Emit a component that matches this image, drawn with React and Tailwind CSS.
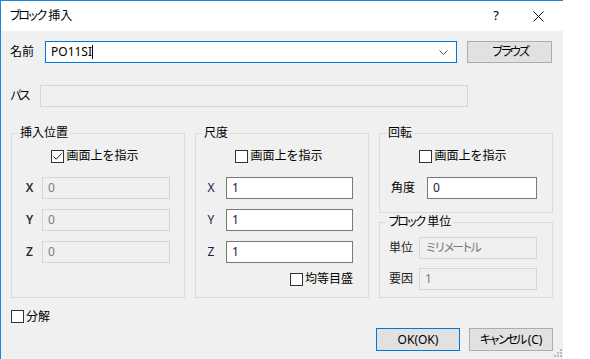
import React from "react";

function Check({ checked }) {
  return (
    <span className="w-[13px] h-[13px] border border-[#333333] bg-white flex items-center justify-center shrink-0">
      {checked && (
        <svg width="11" height="11" viewBox="0 0 11 11">
          <path d="M1.5 5.5 L4.2 8.2 L9.5 2.5" fill="none" stroke="#222" strokeWidth="1" />
        </svg>
      )}
    </span>
  );
}

function Field({ value, disabled, w }) {
  return (
    <div
      className={`h-[22px] border flex items-center px-[5px] text-[12px] ${
        disabled
          ? "border-[#d6d6d6] bg-[#f0f0f0] text-[#7a7a7a]"
          : "border-[#7a7a7a] bg-white text-[#1a1a40]"
      } ${w}`}
    >
      {value}
    </div>
  );
}

function Group({ title, className, children }) {
  return (
    <fieldset className={`border border-[#dcdcdc] ${className}`}>
      <legend className="ml-[6px] px-[2px] text-[12px] leading-[14px] text-black">
        {title}
      </legend>
      {children}
    </fieldset>
  );
}

// narrow kana run, the dialog font draws kana about 9px wide
const Kana = ({ children }) => <span className="tracking-[-3px]">{children}</span>;

export default function App() {
  return (
    <div className="w-[590px] h-[359px] bg-white flex font-['Noto_Sans','Noto_Sans_CJK_JP',sans-serif] text-[12px] text-black">
      <div className="w-[563px] h-[359px] border-l border-t border-[#1c86d8] bg-[#f0f0f0] flex flex-col relative">
        {/* Title bar */}
        <div className="h-[30px] bg-white flex items-center pl-[8px]">
          <span className="leading-[14px]">
            <Kana>ブロック</Kana> 挿入
          </span>
          <span className="ml-auto mr-[34px] text-[13px]">?</span>
          <svg width="11" height="11" viewBox="0 0 11 11" className="mr-[19px]">
            <path d="M0.5 0.5 L10.5 10.5 M10.5 0.5 L0.5 10.5" stroke="#111" strokeWidth="1" />
          </svg>
        </div>

        <div className="flex flex-col pl-[9px]">
          {/* Name */}
          <div className="mt-[10px] flex items-center h-[22px]">
            <span className="w-[35px]">名前</span>
            <div className="w-[412px] h-[22px] border border-[#0078d7] bg-white flex items-center pl-[5px] pr-[8px]">
              <span>PO11SI</span>
              <span className="w-px h-[14px] bg-black" />
              <svg width="9" height="5" viewBox="0 0 9 5" className="ml-auto">
                <path d="M0.5 0.5 L4.5 4.5 L8.5 0.5" fill="none" stroke="#555" strokeWidth="1" />
              </svg>
            </div>
            <button className="ml-[10px] w-[85px] h-[22px] border border-[#adadad] bg-[#e1e1e1] text-[12px]">
              <Kana>ブラウズ</Kana>
            </button>
          </div>

          {/* Path */}
          <div className="mt-[22px] flex items-center h-[22px]">
            <span className="w-[30px]">
              <Kana>パス</Kana>
            </span>
            <Field disabled w="w-[428px]" />
          </div>

          {/* Groups */}
          <div className="mt-[19px] pl-[1px] flex gap-[10px]">
            <Group title="挿入位置" className="w-[174px] h-[172px]">
              <div className="mt-[8px] h-[16px] flex items-center justify-center gap-[2px] pr-[6px]">
                <Check checked />
                <span>画面上を指示</span>
              </div>
              <div className="mt-[13px] flex flex-col gap-[10px]">
                {["X", "Y", "Z"].map((l) => (
                  <div key={l} className="flex items-center">
                    <span className="w-[30px] pl-[5px] text-center font-semibold text-[#2a2a3a]">{l}</span>
                    <Field value="0" disabled w="w-[128px]" />
                  </div>
                ))}
              </div>
            </Group>

            <Group title="尺度" className="w-[174px] h-[172px]">
              <div className="mt-[8px] h-[16px] flex items-center justify-center gap-[2px] pr-[6px]">
                <Check />
                <span>画面上を指示</span>
              </div>
              <div className="mt-[13px] flex flex-col gap-[10px]">
                {["X", "Y", "Z"].map((l) => (
                  <div key={l} className="flex items-center">
                    <span className="w-[30px] text-center text-[#1a1a40]">{l}</span>
                    <Field value="1" w="w-[127px]" />
                  </div>
                ))}
              </div>
              <div className="mt-[9px] h-[14px] flex items-center justify-end gap-[2px] pr-[15px]">
                <Check />
                <span>均等目盛</span>
              </div>
            </Group>

            <div className="w-[174px] flex flex-col">
              <Group title="回転" className="h-[87px]">
                <div className="mt-[8px] h-[16px] flex items-center justify-center gap-[2px] pr-[6px]">
                  <Check />
                  <span>画面上を指示</span>
                </div>
                <div className="mt-[13px] flex items-center pl-[11px]">
                  <span className="w-[36px]">角度</span>
                  <Field value="0" w="w-[110px]" />
                </div>
              </Group>
              <Group
                title={
                  <>
                    <Kana>ブロック</Kana> 単位
                  </>
                }
                className="mt-[2px] h-[83px]"
              >
                <div className="mt-[8px] flex flex-col gap-[9px]">
                  <div className="flex items-center pl-[9px]">
                    <span className="w-[30px] text-[#222]">単位</span>
                    <Field value={<Kana>ミリメートル</Kana>} disabled w="w-[118px]" />
                  </div>
                  <div className="flex items-center pl-[9px]">
                    <span className="w-[30px] text-[#222]">要因</span>
                    <Field value="1" disabled w="w-[118px]" />
                  </div>
                </div>
              </Group>
            </div>
          </div>

          {/* Explode */}
          <div className="mt-[12px] h-[13px] pl-[1px] flex items-center gap-[2px]">
            <Check />
            <span>分解</span>
          </div>

          {/* Buttons */}
          <div className="mt-[5px] flex justify-end gap-[9px] pr-[10px]">
            <button className="w-[84px] h-[23px] border border-[#0078d7] bg-[#e1e1e1] text-[12px]">
              OK(OK)
            </button>
            <button className="w-[84px] h-[23px] border border-[#adadad] bg-[#e1e1e1] text-[12px]">
              <Kana>キャンセル</Kana> (C)
            </button>
          </div>
        </div>

        {/* size grip */}
        <svg width="8" height="8" viewBox="0 0 8 8" className="absolute right-[1px] bottom-[2px]">
          <rect x="6" y="0" width="2" height="2" fill="#bcbcbc" />
          <rect x="3" y="3" width="2" height="2" fill="#bcbcbc" />
          <rect x="6" y="3" width="2" height="2" fill="#bcbcbc" />
          <rect x="0" y="6" width="2" height="2" fill="#bcbcbc" />
          <rect x="3" y="6" width="2" height="2" fill="#bcbcbc" />
          <rect x="6" y="6" width="2" height="2" fill="#bcbcbc" />
        </svg>
      </div>
    </div>
  );
}
